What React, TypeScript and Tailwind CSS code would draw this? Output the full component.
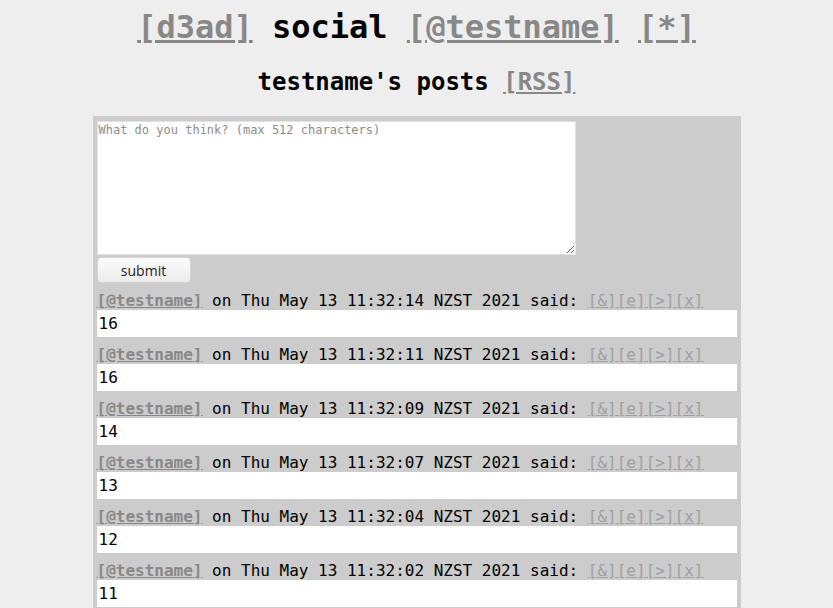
import React from "react";

const posts = [
  { time: "Thu May 13 11:32:14 NZST 2021", body: "16" },
  { time: "Thu May 13 11:32:11 NZST 2021", body: "16" },
  { time: "Thu May 13 11:32:09 NZST 2021", body: "14" },
  { time: "Thu May 13 11:32:07 NZST 2021", body: "13" },
  { time: "Thu May 13 11:32:04 NZST 2021", body: "12" },
  { time: "Thu May 13 11:32:02 NZST 2021", body: "11" },
];

const mono = "font-['DejaVu_Sans_Mono',monospace]";

export default function App() {
  return (
    <div className={`min-h-screen bg-[#eeeeee] text-black ${mono}`}>
      {/* header */}
      <h1 className="pt-[9px] text-center text-[32px] font-bold leading-[37px]">
        <a href="#" className="text-[#888888] underline">[d3ad]</a>{" "}
        social{" "}
        <a href="#" className="text-[#888888] underline">[@testname]</a>{" "}
        <a href="#" className="text-[#888888] underline">[*]</a>
      </h1>
      <h2 className="mt-[22px] text-center text-[24px] font-bold leading-[28px]">
        testname's posts{" "}
        <a href="#" className="text-[#888888] underline">[RSS]</a>
      </h2>

      {/* main panel */}
      <div className="mx-auto mt-[20px] w-[648px] bg-[#cccccc] px-[4px] pt-[5px] pb-[4px]">
        <textarea
          placeholder="What do you think? (max 512 characters)"
          className="block h-[134px] w-[479px] resize border border-[#e2e2e2] bg-white px-[1px] py-[1px] text-[12px] leading-[14px] placeholder:text-[#8c8c8c]"
        />
        <button className="mt-[2px] h-[26px] w-[94px] rounded-[4px] border border-[#d4d4d4] bg-gradient-to-b from-[#fbfbfb] to-[#ececec] font-['Open_Sans',sans-serif] text-[14px] text-[#222]">
          submit
        </button>

        <div className="mt-[8px] flex flex-col gap-[8px]">
          {posts.map((p, i) => (
            <div key={i}>
              <div className="h-[19px] text-[16px] leading-[19px] whitespace-nowrap">
                <a href="#" className="font-bold text-[#888888] underline">[@testname]</a>{" "}
                on {p.time} said:{" "}
                <span className="text-[#a0a0a0] underline">
                  <a href="#">[&amp;]</a>
                  <a href="#">[e]</a>
                  <a href="#">[&gt;]</a>
                  <a href="#">[x]</a>
                </span>
              </div>
              <div className="h-[27px] bg-white px-[2px] text-[16px] leading-[27px]">{p.body}</div>
            </div>
          ))}
        </div>
      </div>
    </div>
  );
}
